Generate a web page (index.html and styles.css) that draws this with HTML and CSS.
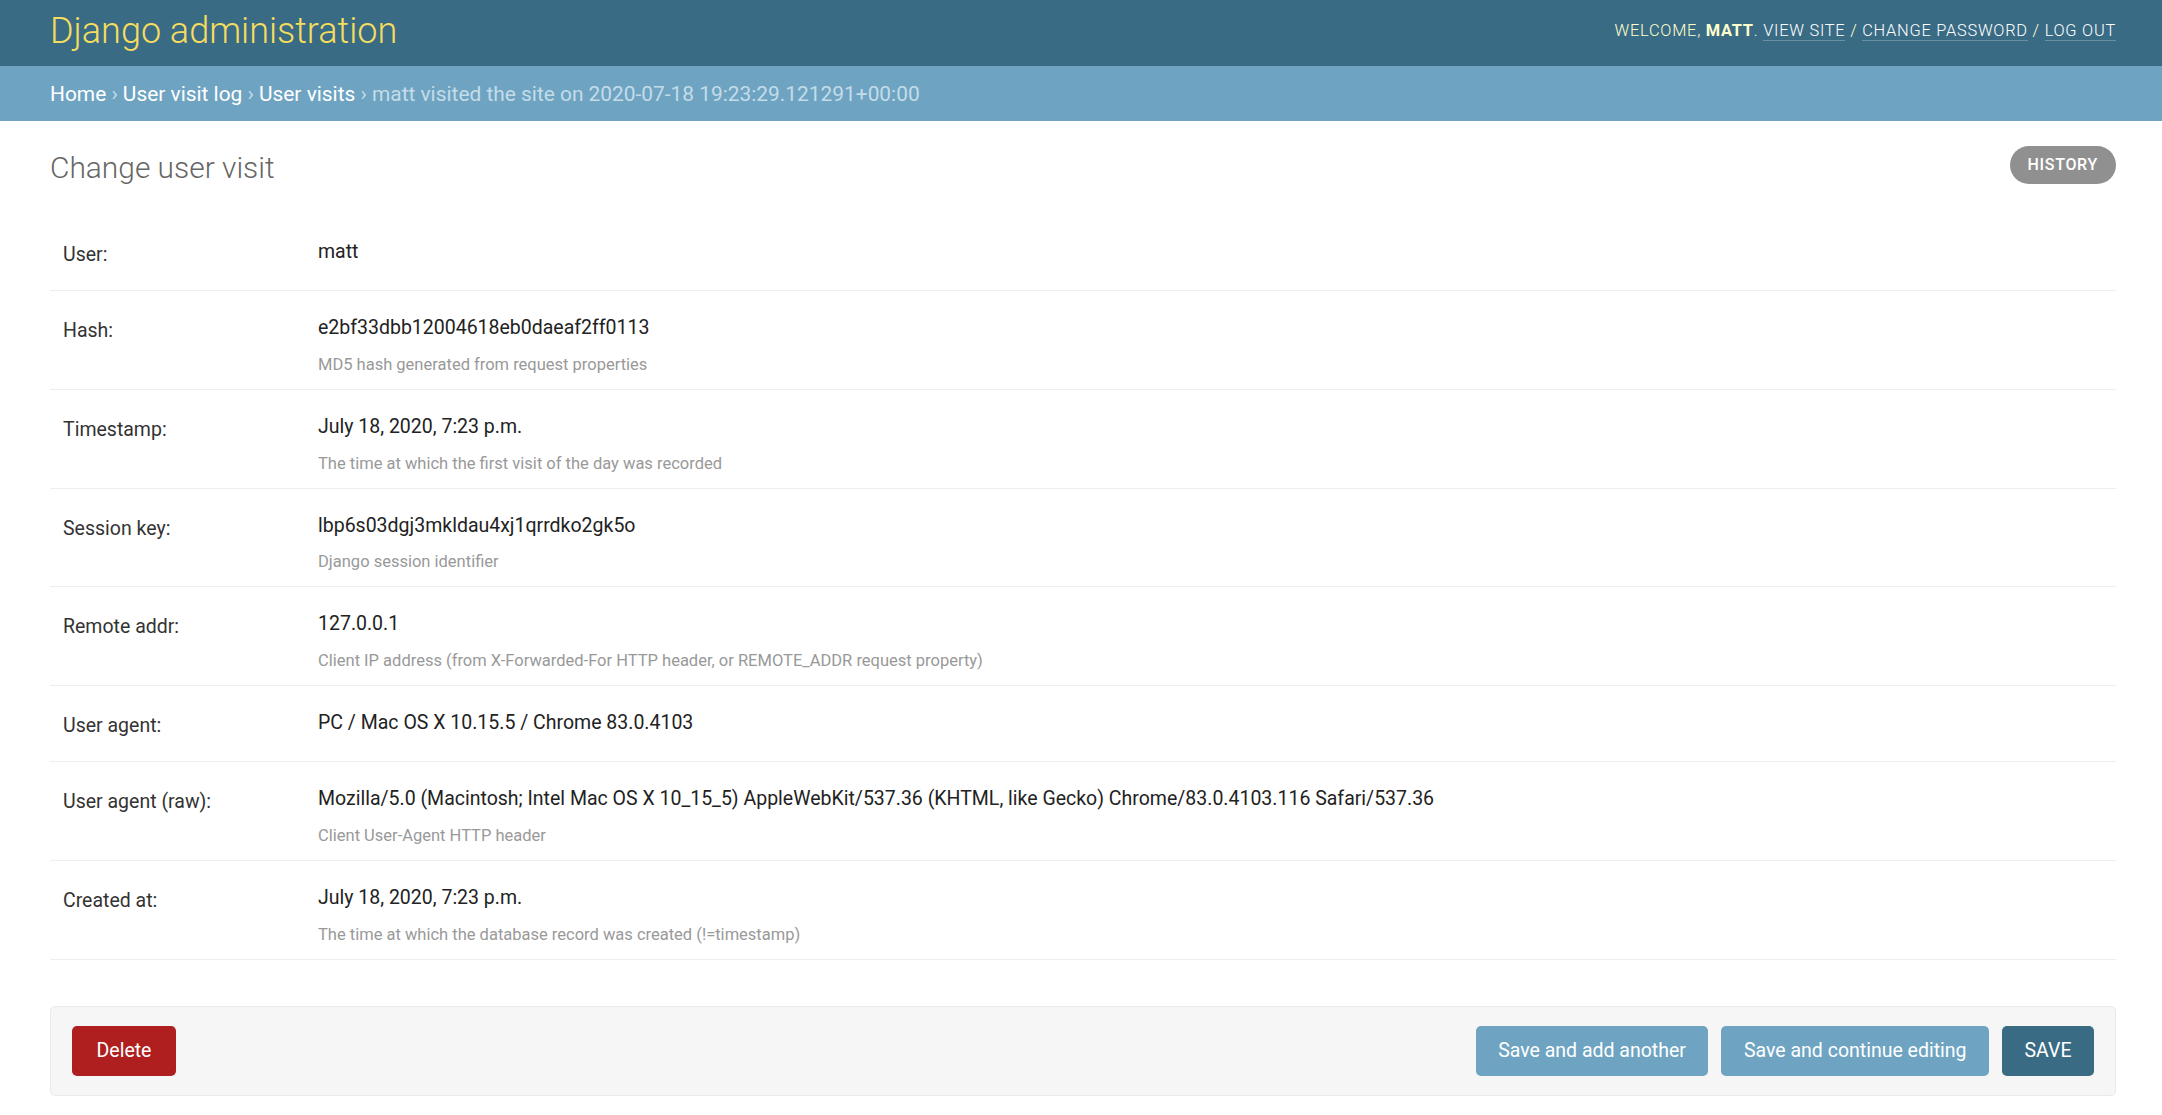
FILE: index.html
```html
<!DOCTYPE html>
<html>
<head>
<meta charset="utf-8">
	<title>Change user visit | Django site admin</title>

	<link rel="stylesheet" href="styles.css">
</head>
<body>

<div id="header">
	<div class="branding">Django administration</div>
	<div class="user-tools">
		Welcome, <strong>matt</strong>.
		<a href="#">View site</a> /
		<a href="#">Change password</a> /
		<a href="#">Log out</a>
	</div>
</div>

<div class="breadcrumbs">
	<a href="#">Home</a> &rsaquo; <a href="#">User visit log</a> &rsaquo; <a href="#">User visits</a> &rsaquo; matt visited the site on 2020-07-18 19:23:29.121291+00:00
</div>

<div class="content">
	<div class="title-row">
		<h1>Change user visit</h1>
		<a class="history" href="#">History</a>
	</div>

	<div class="fieldset">
		<div class="form-row">
			<label>User:</label>
			<div class="field">
				<div class="readonly">matt</div>
			</div>
		</div>
		<div class="form-row">
			<label>Hash:</label>
			<div class="field">
				<div class="readonly">e2bf33dbb12004618eb0daeaf2ff0113</div>
				<div class="help">MD5 hash generated from request properties</div>
			</div>
		</div>
		<div class="form-row">
			<label>Timestamp:</label>
			<div class="field">
				<div class="readonly">July 18, 2020, 7:23 p.m.</div>
				<div class="help">The time at which the first visit of the day was recorded</div>
			</div>
		</div>
		<div class="form-row">
			<label>Session key:</label>
			<div class="field">
				<div class="readonly">lbp6s03dgj3mkldau4xj1qrrdko2gk5o</div>
				<div class="help">Django session identifier</div>
			</div>
		</div>
		<div class="form-row">
			<label>Remote addr:</label>
			<div class="field">
				<div class="readonly">127.0.0.1</div>
				<div class="help">Client IP address (from X-Forwarded-For HTTP header, or REMOTE_ADDR request property)</div>
			</div>
		</div>
		<div class="form-row">
			<label>User agent:</label>
			<div class="field">
				<div class="readonly">PC / Mac OS X 10.15.5 / Chrome 83.0.4103</div>
			</div>
		</div>
		<div class="form-row">
			<label>User agent (raw):</label>
			<div class="field">
				<div class="readonly">Mozilla/5.0 (Macintosh; Intel Mac OS X 10_15_5) AppleWebKit/537.36 (KHTML, like Gecko) Chrome/83.0.4103.116 Safari/537.36</div>
				<div class="help">Client User-Agent HTTP header</div>
			</div>
		</div>
		<div class="form-row">
			<label>Created at:</label>
			<div class="field">
				<div class="readonly">July 18, 2020, 7:23 p.m.</div>
				<div class="help">The time at which the database record was created (!=timestamp)</div>
			</div>
		</div>
	</div>

	<div class="submit-row">
		<a class="btn deletelink" href="#">Delete</a>
		<span class="spacer"></span>
		<a class="btn" href="#">Save and add another</a>
		<a class="btn" href="#">Save and continue editing</a>
		<a class="btn default" href="#">Save</a>
	</div>
</div>

</body>
</html>
```

FILE: styles.css
```css
body{
	margin: 0;
	font-family: Roboto, "Liberation Sans", sans-serif;
	color: #333;
	background: #fff;
}
a{
	text-decoration: none;
}

#header{
	height: 66px;
	padding: 0 46px 0 50px;
	background: #3a6b85;
	display: flex;
	justify-content: space-between;
	align-items: center;
	color: #ffc;
}
.branding{
	font-size: 36px;
	font-weight: 300;
	color: #f5dd5d;
	margin-top: -4px;
}
.user-tools{
	font-size: 16.4px;
	font-weight: 300;
	letter-spacing: 0.75px;
	text-transform: uppercase;
	margin-top: -6px;
}
.user-tools strong{
	font-weight: 700;
}
.user-tools a{
	color: #fff;
	border-bottom: 1px solid rgba(255,255,255,0.25);
}

.breadcrumbs{
	height: 55px;
	padding: 0 50px;
	background: #6ea4c2;
	display: flex;
	align-items: center;
	font-size: 20.9px;
	color: #c4dce8;
	white-space: pre;
}
.breadcrumbs a{
	color: #fff;
}

.content{
	padding: 25px 46px 20px 50px;
}
.title-row{
	display: flex;
	justify-content: space-between;
	align-items: flex-start;
	margin-bottom: 31px;
}
.title-row h1{
	margin: 6px 0 0;
	font-size: 29.9px;
	line-height: 32px;
	font-weight: 300;
	color: #666;
}
.history{
	height: 38px;
	line-height: 38px;
	padding: 0 18px;
	border-radius: 19px;
	background: #909090;
	color: #fff;
	font-size: 16px;
	font-weight: 500;
	letter-spacing: 0.7px;
	text-transform: uppercase;
}

.form-row{
	display: flex;
	padding: 14px 13px;
	border-bottom: 1px solid #eee;
	font-size: 19.5px;
}
.form-row label{
	width: 255px;
	flex: none;
	padding-top: 13px;
	line-height: 26px;
	color: #333;
}
.field{
	padding-top: 10px;
}
.readonly{
	line-height: 26px;
	padding-bottom: 11px;
	color: #222;
}
.help{
	margin-top: 2.75px;
	line-height: 20px;
	font-size: 16.5px;
	color: #999;
}

.submit-row{
	margin-top: 46px;
	padding: 19px 21px;
	background: #f6f6f6;
	border: 1px solid #eaeaea;
	border-radius: 5px;
	display: flex;
	gap: 13px;
}
.submit-row .spacer{
	flex: 1;
}
.btn{
	height: 50px;
	line-height: 50px;
	padding: 0 22.5px;
	border-radius: 5px;
	background: #6ea4c2;
	color: #fff;
	font-size: 19.5px;
}
.btn.deletelink{
	padding: 0 24.5px;
	background: #b01f1f;
}
.btn.default{
	background: #3a6b85;
	text-transform: uppercase;
}
```
